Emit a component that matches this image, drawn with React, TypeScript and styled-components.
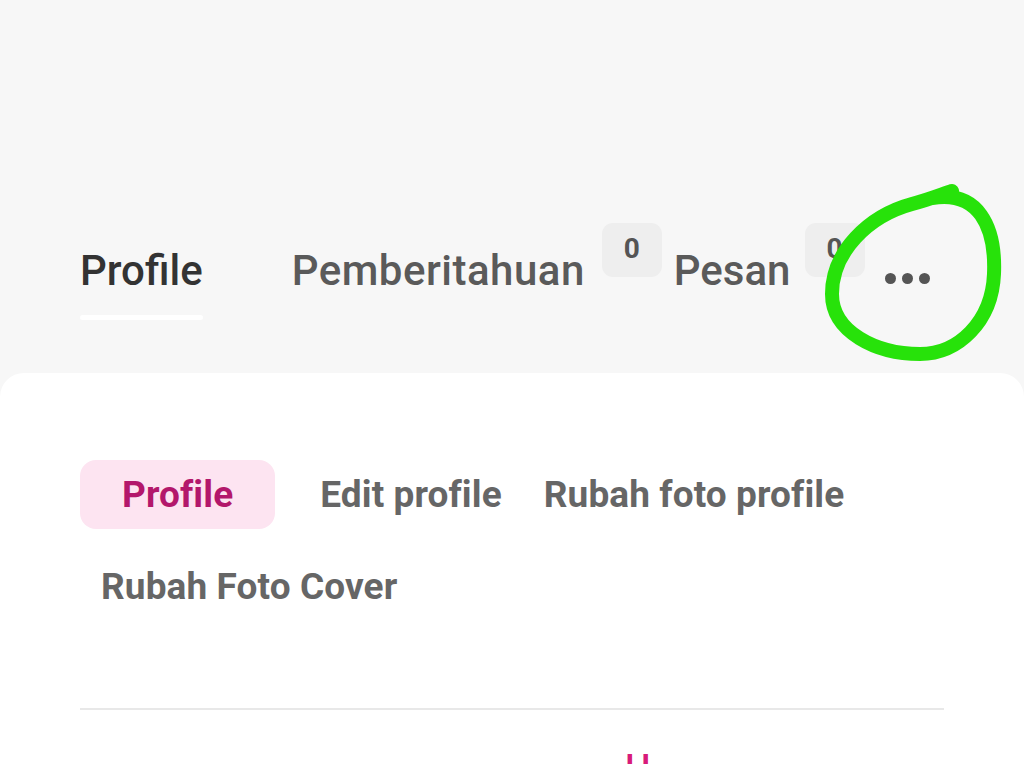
import React from "react";
import styled, { createGlobalStyle } from "styled-components";

const Global = createGlobalStyle`
  html, body { margin: 0; padding: 0; background: #f7f7f7; }
  body { width: 1024px; height: 764px; overflow: hidden; }
  * { box-sizing: border-box; }
`;

const Page = styled.div`
  position: relative;
  width: 1024px;
  height: 764px;
  overflow: hidden;
  background: #f7f7f7;
`;

const Header = styled.header`
  height: 373px;
  padding: 223px 0 0 80px;
`;

const Tabs = styled.nav`
  display: flex;
  align-items: flex-start;
`;

const Tab = styled.div<{ $gap?: number }>`
  display: flex;
  flex-direction: column;
  margin-right: ${(p) => p.$gap ?? 0}px;
`;

const TabLabel = styled.span<{ $active?: boolean; $spacing?: number }>`
  margin-top: 23px;
  font-family: Roboto, "Noto Sans", sans-serif;
  font-size: 42px;
  font-weight: 500;
  line-height: 50px;
  letter-spacing: ${(p) => p.$spacing ?? 0}px;
  color: ${(p) => (p.$active ? "#333333" : "#5a5a5a")};
  white-space: nowrap;
`;

const Underline = styled.span`
  margin-top: 19px;
  height: 5px;
  border-radius: 3px;
  background: #ffffff;
`;

const Badge = styled.span<{ $gap: number }>`
  width: 60px;
  height: 54px;
  margin-right: ${(p) => p.$gap}px;
  border-radius: 11px;
  background: #eeeeee;
  display: flex;
  justify-content: center;
  padding-top: 11px;
  font-family: Roboto, "Noto Sans", sans-serif;
  font-size: 28px;
  font-weight: 700;
  line-height: 30px;
  color: #555555;
`;

const Dots = styled.button`
  margin-top: 50px;
  padding: 0;
  border: 0;
  background: none;
  display: flex;
  gap: 6px;
`;

const Dot = styled.span`
  width: 11px;
  height: 11px;
  border-radius: 50%;
  background: #555555;
`;

const Card = styled.main`
  background: #ffffff;
  border-radius: 24px 24px 0 0;
  padding: 87px 80px 0;
  height: 391px;
`;

const SubNav = styled.div`
  display: flex;
  flex-wrap: wrap;
  row-gap: 23px;
`;

const SubItem = styled.span<{ $active?: boolean }>`
  height: 69px;
  display: flex;
  align-items: center;
  padding: 0 ${(p) => (p.$active ? 42 : 21)}px;
  margin-right: ${(p) => (p.$active ? 24 : 0)}px;
  border-radius: 16px;
  background: ${(p) => (p.$active ? "#fde4f1" : "transparent")};
  font-family: Roboto, "Liberation Sans", sans-serif;
  font-size: 37px;
  font-weight: 700;
  letter-spacing: 0.1px;
  color: ${(p) => (p.$active ? "#b3176b" : "#666666")};
  white-space: nowrap;
`;

const Divider = styled.hr`
  margin: 87px 0 0;
  border: 0;
  height: 2px;
  background: #e8e8e8;
`;

const Heading = styled.h2`
  margin: 36px 0 0;
  padding-left: 545px;
  font-family: Roboto, "Liberation Sans", sans-serif;
  font-size: 36px;
  font-weight: 500;
  line-height: 44px;
  color: #d81b7a;
`;

const Scribble = styled.svg`
  position: absolute;
  left: 820px;
  top: 182px;
  pointer-events: none;
`;

export default function App() {
  return (
    <Page>
      <Global />
      <Header>
        <Tabs>
          <Tab $gap={89}>
            <TabLabel $active>Profile</TabLabel>
            <Underline />
          </Tab>
          <Tab $gap={17}>
            <TabLabel $spacing={0.5}>Pemberitahuan</TabLabel>
          </Tab>
          <Badge $gap={12}>0</Badge>
          <Tab $gap={14}>
            <TabLabel>Pesan</TabLabel>
          </Tab>
          <Badge $gap={20}>0</Badge>
          <Dots aria-label="more">
            <Dot />
            <Dot />
            <Dot />
          </Dots>
        </Tabs>
      </Header>
      <Card>
        <SubNav>
          <SubItem $active>Profile</SubItem>
          <SubItem>Edit profile</SubItem>
          <SubItem>Rubah foto profile</SubItem>
          <SubItem>Rubah Foto Cover</SubItem>
        </SubNav>
        <Divider />
        <Heading>H</Heading>
      </Card>
      <Scribble width="190" height="185" viewBox="0 0 190 185">
        <path
          d="M 112 16 C 158 8, 176 44, 174 92 C 172 140, 138 172, 100 172 C 56 172, 12 150, 12 112 C 12 70, 48 34, 92 22 C 108 18, 120 13, 132 9"
          fill="none"
          stroke="#27e20a"
          strokeWidth="14"
          strokeLinecap="round"
          strokeLinejoin="round"
        />
      </Scribble>
    </Page>
  );
}
